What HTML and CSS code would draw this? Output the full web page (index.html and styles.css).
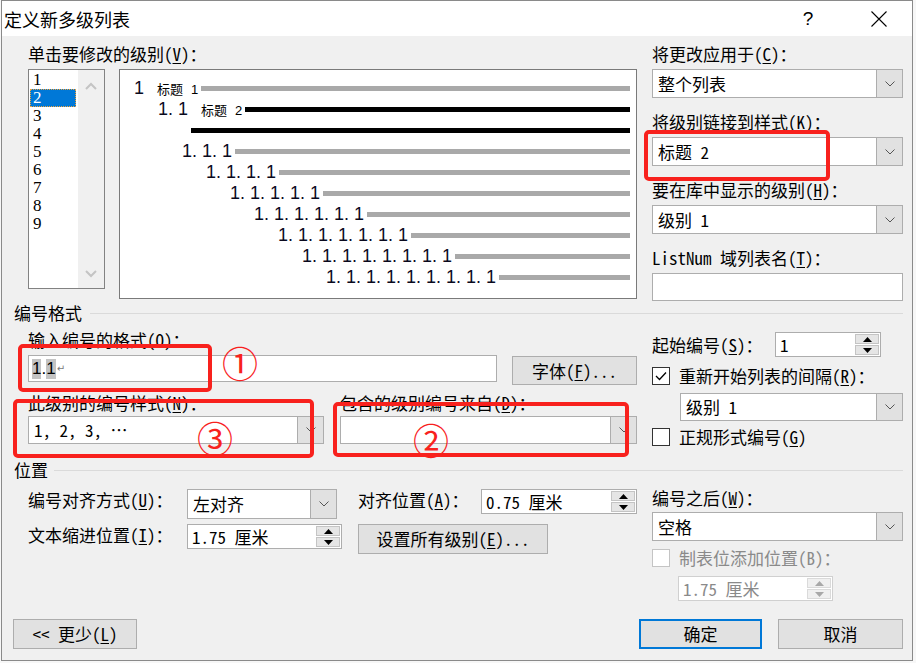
FILE: index.html
```html
<!DOCTYPE html>
<html lang="zh-CN">
<head>
    <meta charset="UTF-8">
    <title>定义新多级列表</title>
    <link rel="stylesheet" href="styles.css">
</head>
<body>

<div class="dialog">
    <div class="titlebar">
        <span class="title">定义新多级列表</span>
        <span class="help">?</span>
        <span class="close">
            <svg width="16" height="16" viewBox="0 0 16 16"><path d="M0.5 0.5 L15.5 15.5 M15.5 0.5 L0.5 15.5" stroke="#000" stroke-width="1.1"/></svg>
        </span>
    </div>

    <div class="content">
        <!-- level list + preview, and the style links on the right -->
        <div class="top">
            <div class="levels">
                <div class="field-label">单击要修改的级别(<u>V</u>)：</div>
                <div class="levels-row">
                    <div class="listbox">
                        <ul class="items">
                            <li>1</li>
                            <li class="selected">2</li>
                            <li>3</li>
                            <li>4</li>
                            <li>5</li>
                            <li>6</li>
                            <li>7</li>
                            <li>8</li>
                            <li>9</li>
                        </ul>
                        <div class="scroll">
                            <svg width="12" height="8" viewBox="0 0 12 8"><polyline points="1,7 6,2 11,7" fill="none" stroke="#c4c4c4" stroke-width="2"/></svg>
                            <svg width="12" height="8" viewBox="0 0 12 8"><polyline points="1,1 6,6 11,1" fill="none" stroke="#c4c4c4" stroke-width="2"/></svg>
                        </div>
                    </div>
                    <div class="preview">
                        <div class="pv-row lv1"><span class="num">1</span><span class="style-name">标题<i>1</i></span><span class="bar"></span></div>
                        <div class="pv-row lv2"><span class="num">1. 1</span><span class="style-name">标题<i>2</i></span><span class="bar dark"></span></div>
                        <div class="pv-row lv2b"><span class="bar dark"></span></div>
                        <div class="pv-row lv3"><span class="num">1. 1. 1</span><span class="bar"></span></div>
                        <div class="pv-row lv4"><span class="num">1. 1. 1. 1</span><span class="bar"></span></div>
                        <div class="pv-row lv5"><span class="num">1. 1. 1. 1. 1</span><span class="bar"></span></div>
                        <div class="pv-row lv6"><span class="num">1. 1. 1. 1. 1. 1</span><span class="bar"></span></div>
                        <div class="pv-row lv7"><span class="num">1. 1. 1. 1. 1. 1. 1</span><span class="bar"></span></div>
                        <div class="pv-row lv8"><span class="num">1. 1. 1. 1. 1. 1. 1. 1</span><span class="bar"></span></div>
                        <div class="pv-row lv9"><span class="num">1. 1. 1. 1. 1. 1. 1. 1. 1</span><span class="bar"></span></div>
                    </div>
                </div>
            </div>

            <div class="side">
                <div class="group">
                    <div class="field-label">将更改应用于(<u>C</u>)：</div>
                    <div class="combo"><span class="value">整个列表</span><span class="drop"><svg width="10" height="6" viewBox="0 0 10 6"><polyline points="0.5,0.5 5,5 9.5,0.5" fill="none" stroke="#555" stroke-width="1"/></svg></span></div>
                </div>
                <div class="group">
                    <div class="field-label">将级别链接到样式(<u>K</u>)：</div>
                    <div class="combo"><span class="value">标题 2</span><span class="drop"><svg width="10" height="6" viewBox="0 0 10 6"><polyline points="0.5,0.5 5,5 9.5,0.5" fill="none" stroke="#555" stroke-width="1"/></svg></span></div>
                </div>
                <div class="group">
                    <div class="field-label">要在库中显示的级别(<u>H</u>)：</div>
                    <div class="combo"><span class="value">级别 1</span><span class="drop"><svg width="10" height="6" viewBox="0 0 10 6"><polyline points="0.5,0.5 5,5 9.5,0.5" fill="none" stroke="#555" stroke-width="1"/></svg></span></div>
                </div>
                <div class="group">
                    <div class="field-label">ListNum 域列表名(<u>T</u>)：</div>
                    <div class="textbox"></div>
                </div>
            </div>
        </div>

        <div class="section-head">编号格式</div>

        <div class="format">
            <div class="format-main">
                <div class="field-label">输入编号的格式(O)：</div>
                <div class="input-row">
                    <div class="format-input"><span class="sel">1</span>.<span class="sel">1</span><span class="para-mark">↵</span></div>
                    <div class="btn font-btn">字体(<u>F</u>)...</div>
                </div>
                <div class="style-row">
                    <div class="style-group first">
                        <div class="field-label">此级别的编号样式(<u>N</u>)：</div>
                        <div class="combo"><span class="value">1, 2, 3, …</span><span class="drop"><svg width="10" height="6" viewBox="0 0 10 6"><polyline points="0.5,0.5 5,5 9.5,0.5" fill="none" stroke="#555" stroke-width="1"/></svg></span></div>
                    </div>
                    <div class="style-group second">
                        <div class="field-label">包含的级别编号来自(<u>D</u>)：</div>
                        <div class="combo"><span class="value"></span><span class="drop"><svg width="10" height="6" viewBox="0 0 10 6"><polyline points="0.5,0.5 5,5 9.5,0.5" fill="none" stroke="#555" stroke-width="1"/></svg></span></div>
                    </div>
                </div>
            </div>

            <div class="side">
                <div class="start-row">
                    <span class="start-label">起始编号(<u>S</u>)：</span>
                    <div class="spin start-spin">
                        <span class="value">1</span>
                        <span class="arrows">
                            <span><svg width="9" height="5" viewBox="0 0 9 5"><polygon points="4.5,0 9,5 0,5" fill="#000"/></svg></span>
                            <span><svg width="9" height="5" viewBox="0 0 9 5"><polygon points="0,0 9,0 4.5,5" fill="#000"/></svg></span>
                        </span>
                    </div>
                </div>
                <div class="check-row">
                    <span class="checkbox"><svg width="12" height="10" viewBox="0 0 12 10"><polyline points="1,5 4.5,8.5 11,1.5" fill="none" stroke="#000" stroke-width="1.3"/></svg></span>
                    <span>重新开始列表的间隔(<u>R</u>)：</span>
                </div>
                <div class="combo restart-combo"><span class="value">级别 1</span><span class="drop"><svg width="10" height="6" viewBox="0 0 10 6"><polyline points="0.5,0.5 5,5 9.5,0.5" fill="none" stroke="#555" stroke-width="1"/></svg></span></div>
                <div class="check-row legal-row">
                    <span class="checkbox"></span>
                    <span>正规形式编号(<u>G</u>)</span>
                </div>
            </div>
        </div>

        <div class="section-head pos-head">位置</div>

        <div class="position">
            <div class="pos-grid">
                <span class="grid-label">编号对齐方式(<u>U</u>)：</span>
                <div class="combo align-combo"><span class="value">左对齐</span><span class="drop"><svg width="10" height="6" viewBox="0 0 10 6"><polyline points="0.5,0.5 5,5 9.5,0.5" fill="none" stroke="#555" stroke-width="1"/></svg></span></div>
                <span class="grid-label">对齐位置(<u>A</u>)：</span>
                <div class="spin at-spin">
                    <span class="value">0.75 厘米</span>
                    <span class="arrows">
                        <span><svg width="9" height="5" viewBox="0 0 9 5"><polygon points="4.5,0 9,5 0,5" fill="#000"/></svg></span>
                        <span><svg width="9" height="5" viewBox="0 0 9 5"><polygon points="0,0 9,0 4.5,5" fill="#000"/></svg></span>
                    </span>
                </div>

                <span class="grid-label">文本缩进位置(<u>I</u>)：</span>
                <div class="spin indent-spin">
                    <span class="value">1.75 厘米</span>
                    <span class="arrows">
                        <span><svg width="9" height="5" viewBox="0 0 9 5"><polygon points="4.5,0 9,5 0,5" fill="#000"/></svg></span>
                        <span><svg width="9" height="5" viewBox="0 0 9 5"><polygon points="0,0 9,0 4.5,5" fill="#000"/></svg></span>
                    </span>
                </div>
                <div class="btn all-btn">设置所有级别(<u>E</u>)...</div>
            </div>

            <div class="side pos-side">
                <div class="field-label">编号之后(<u>W</u>)：</div>
                <div class="combo"><span class="value">空格</span><span class="drop"><svg width="10" height="6" viewBox="0 0 10 6"><polyline points="0.5,0.5 5,5 9.5,0.5" fill="none" stroke="#555" stroke-width="1"/></svg></span></div>
                <div class="check-row disabled">
                    <span class="checkbox"></span>
                    <span>制表位添加位置(B)：</span>
                </div>
                <div class="spin tab-spin">
                    <span class="value">1.75 厘米</span>
                    <span class="arrows">
                        <span><svg width="9" height="5" viewBox="0 0 9 5"><polygon points="4.5,0 9,5 0,5" fill="#a8a8a8"/></svg></span>
                        <span><svg width="9" height="5" viewBox="0 0 9 5"><polygon points="0,0 9,0 4.5,5" fill="#a8a8a8"/></svg></span>
                    </span>
                </div>
            </div>
        </div>

        <div class="footer">
            <div class="btn less-btn">&lt;&lt; 更少(<u>L</u>)</div>
            <div class="btn ok-btn">确定</div>
            <div class="btn cancel-btn">取消</div>
        </div>
    </div>

    <!-- red annotation marks drawn over the dialog -->
    <div class="mark mark-k"></div>
    <div class="mark mark-1"></div>
    <div class="mark mark-3"></div>
    <div class="mark mark-2"></div>
    <span class="circled c1">①</span>
    <span class="circled c2">②</span>
    <span class="circled c3">③</span>
</div>

</body>
</html>
```

FILE: styles.css
```css
* {
    box-sizing: border-box;
}

body {
    margin: 0;
    background-color: #f7f7f7;
    font-family: "Noto Sans Mono CJK SC", "Noto Sans CJK SC", sans-serif;
    font-size: 17px;
    color: #000;
}

u {
    text-underline-offset: 2px;
}

.dialog {
    position: relative;
    width: 912px;
    height: 661px;
    margin-left: 1px;
    border: 1px solid #8a8a8a;
    background-color: #f0f0f0;
}

/* title bar */
.titlebar {
    display: flex;
    align-items: center;
    height: 35px;
    background-color: #fff;
}

.title {
    padding-left: 2px;
    font-family: "Noto Sans CJK SC", sans-serif;
    font-size: 18px;
}

.help {
    margin-left: auto;
    width: 46px;
    text-align: center;
    font-family: "Liberation Sans", sans-serif;
    font-size: 19px;
}

.close {
    width: 46px;
    margin: 0 10px 0 25px;
    display: flex;
    justify-content: center;
}

.content {
    padding: 0 9px 0 12px;
}

.field-label {
    line-height: 20px;
    margin-bottom: 5px;
    white-space: nowrap;
}

/* top area */
.top {
    display: flex;
    gap: 15px;
    padding: 8px 0 0 14px;
}

.levels {
    width: 609px;
}

.levels-row {
    display: flex;
    gap: 14px;
    align-items: flex-start;
}

.listbox {
    display: flex;
    width: 77px;
    height: 220px;
    border: 1px solid #828282;
    background-color: #fff;
}

.items {
    flex: 1;
    list-style: none;
    margin: 0;
    padding: 1px 2px 1px 1px;
    font-family: "Liberation Serif", serif;
}

.items li {
    height: 18px;
    line-height: 18px;
    padding-left: 3px;
}

.items li.selected {
    background-color: #0078d7;
    color: #fff;
    outline: 1px dotted #f3a43b;
    outline-offset: -1px;
}

.scroll {
    width: 26px;
    background-color: #f0f0f0;
    display: flex;
    flex-direction: column;
    justify-content: space-between;
    align-items: center;
    padding: 12px 0 10px;
}

.preview {
    width: 518px;
    height: 230px;
    border: 1px solid #7a7a7a;
    background-color: #fff;
    padding-top: 8px;
}

.pv-row {
    display: flex;
    align-items: center;
    height: 21px;
    padding-right: 6px;
}

.lv1 { padding-left: 14px; }
.lv2 { padding-left: 38px; }
.lv2b { padding-left: 71px; }
.lv3 { padding-left: 62px; }
.lv4 { padding-left: 86px; }
.lv5 { padding-left: 110px; }
.lv6 { padding-left: 134px; }
.lv7 { padding-left: 158px; }
.lv8 { padding-left: 182px; }
.lv9 { padding-left: 206px; }

.num {
    font-family: "Liberation Sans", sans-serif;
    font-size: 18px;
    line-height: 21px;
    white-space: nowrap;
    color: #0a0a1e;
}

.style-name {
    margin-left: 13px;
    font-family: "Noto Sans CJK SC", sans-serif;
    font-size: 13px;
    line-height: 21px;
    white-space: nowrap;
}

.style-name i {
    font-style: normal;
    margin-left: 8px;
    font-family: "Liberation Sans", sans-serif;
}

.bar {
    flex: 1;
    height: 5px;
    margin-left: 3px;
    background-color: #a9a9a9;
}

.bar.dark {
    background-color: #000;
}

.lv2b .bar {
    margin-left: 0;
}

.side {
    width: 251px;
}

.group + .group {
    margin-top: 14px;
}

/* controls */
.combo {
    display: flex;
    height: 29px;
    border: 1px solid #adadad;
    background-color: #fff;
}

.combo .value {
    flex: 1;
    padding-left: 5px;
    line-height: 27px;
    white-space: nowrap;
}

.combo .drop {
    width: 26px;
    border-left: 1px solid #adadad;
    background-color: #e1e1e1;
    display: flex;
    align-items: center;
    justify-content: center;
}

.textbox {
    height: 28px;
    border: 1px solid #adadad;
    background-color: #fff;
}

.btn {
    height: 30px;
    border: 1px solid #adadad;
    background-color: #e1e1e1;
    text-align: center;
    line-height: 28px;
    white-space: nowrap;
}

.spin {
    display: flex;
    height: 25px;
    border: 1px solid #adadad;
    background-color: #fff;
}

.spin .value {
    flex: 1;
    padding-left: 4px;
    line-height: 23px;
    white-space: nowrap;
}

.spin .arrows {
    width: 25px;
    padding: 1px 1px 1px 0;
    display: flex;
    flex-direction: column;
    gap: 1px;
}

.spin .arrows span {
    flex: 1;
    background-color: #e5e5e5;
    border: 1px solid #c4c4c4;
    display: flex;
    align-items: center;
    justify-content: center;
}

.checkbox {
    width: 18px;
    height: 18px;
    margin-right: 9px;
    border: 1px solid #333;
    background-color: #fff;
    display: flex;
    align-items: center;
    justify-content: center;
}

.check-row {
    display: flex;
    align-items: center;
    line-height: 20px;
    margin-top: 9px;
    white-space: nowrap;
}

/* section headings */
.section-head {
    display: flex;
    align-items: center;
    line-height: 20px;
    margin-top: 2px;
}

.section-head::after {
    content: "";
    flex: 1;
    border-top: 1px solid #dadada;
    margin-left: 8px;
}

.pos-head {
    margin-top: 13px;
}

.pos-head::after {
    margin-left: 6px;
}

/* numbering format */
.format {
    display: flex;
    gap: 15px;
    padding-left: 14px;
}

.format-main {
    width: 609px;
}

.format-main > .field-label {
    margin-top: 7px;
}

.input-row {
    display: flex;
    align-items: flex-start;
}

.format-input {
    width: 469px;
    height: 27px;
    padding-left: 3px;
    border: 1px solid #adadad;
    background-color: #fff;
    display: flex;
    align-items: center;
    font-family: "Liberation Sans", sans-serif;
    font-size: 17px;
}

.sel {
    background-color: #c3c3c3;
}

.para-mark {
    margin-left: 1px;
    font-family: "DejaVu Sans", sans-serif;
    font-size: 10px;
    color: #7a7a7a;
}

.font-btn {
    width: 125px;
    height: 29px;
    line-height: 27px;
    margin: 1px 0 0 15px;
}

.style-row {
    display: flex;
    gap: 16px;
    margin-top: 8px;
}

.style-row .field-label {
    margin-bottom: 3px;
}

.style-group.first {
    width: 296px;
}

.style-group.second {
    width: 297px;
}

.style-row .combo {
    height: 28px;
}

.style-row .combo .value {
    line-height: 26px;
}

.start-row {
    display: flex;
    align-items: center;
    margin-top: 9px;
}

.start-label {
    width: 123px;
    white-space: nowrap;
}

.start-spin {
    width: 106px;
}

.restart-combo {
    height: 28px;
    margin: 7px 0 0 28px;
}

.restart-combo .value {
    line-height: 26px;
}

.legal-row {
    margin-top: 6px;
}

/* position */
.position {
    display: flex;
    gap: 15px;
    padding-left: 14px;
}

.pos-grid {
    width: 609px;
    display: grid;
    grid-template-columns: 159px 171px 123px 156px;
    grid-template-rows: 30px 30px;
    row-gap: 5px;
    align-items: start;
    margin-top: 9px;
}

.grid-label {
    line-height: 22px;
    white-space: nowrap;
}

.align-combo {
    width: 150px;
    height: 30px;
}

.align-combo .value {
    line-height: 28px;
}

.at-spin {
    width: 156px;
}

.indent-spin {
    width: 155px;
}

.all-btn {
    grid-column: 3 / 5;
    width: 190px;
}

.pos-side .field-label {
    margin: 8px 0 4px;
}

.check-row.disabled {
    margin-top: 7px;
    color: #8a8a8a;
}

.check-row.disabled .checkbox {
    border-color: #c4c4c4;
}

.tab-spin {
    width: 155px;
    margin: 8px 0 0 26px;
    border-color: #d0d0d0;
    color: #8a8a8a;
}

.tab-spin .arrows span {
    background-color: #f0f0f0;
    border-color: #dadada;
}

/* buttons */
.footer {
    display: flex;
    margin: 18px 0 0 -1px;
}

.less-btn {
    width: 124px;
}

.ok-btn {
    width: 123px;
    margin-left: auto;
    border: 2px solid #0078d7;
    line-height: 26px;
}

.cancel-btn {
    width: 125px;
    margin-left: 16px;
}

/* annotations */
.mark {
    position: absolute;
    border: 4px solid #f8211d;
    border-radius: 5px;
}

.mark-k { left: 642px; top: 129px; width: 186px; height: 51px; }
.mark-1 { left: 16px; top: 343px; width: 194px; height: 48px; }
.mark-3 { left: 11px; top: 398px; width: 301px; height: 59px; }
.mark-2 { left: 331px; top: 401px; width: 296px; height: 55px; }

.circled {
    position: absolute;
    color: #f8211d;
    font-family: "Noto Sans CJK SC", sans-serif;
    font-size: 36px;
    line-height: 1;
}

.c1 { left: 220px; top: 343px; }
.c2 { left: 411px; top: 420px; }
.c3 { left: 195px; top: 418px; }
```
